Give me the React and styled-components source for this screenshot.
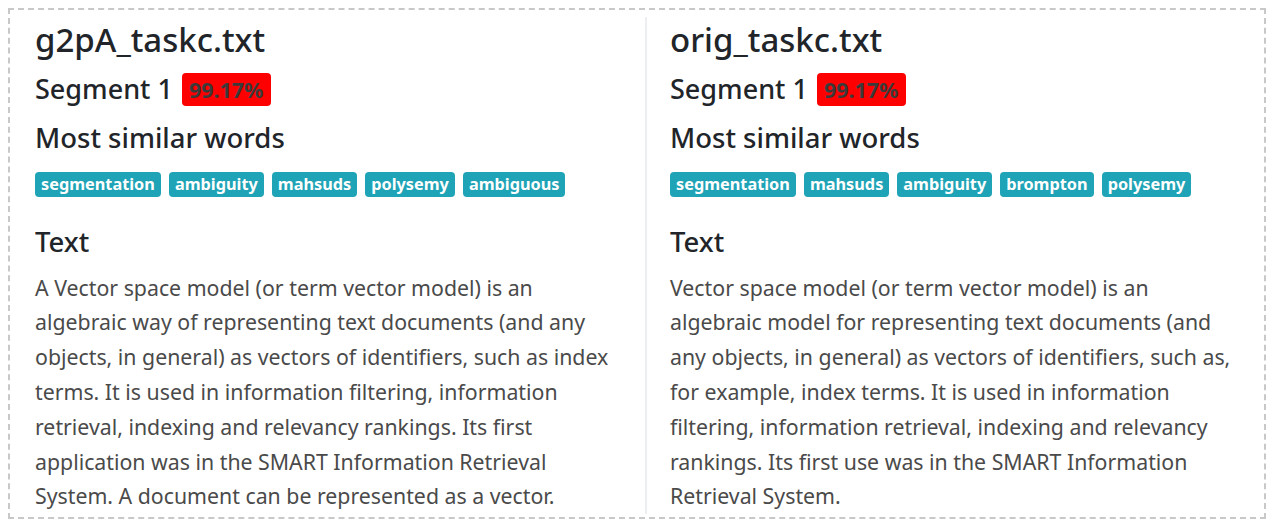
import React from "react";
import styled, { createGlobalStyle } from "styled-components";

const GlobalStyle = createGlobalStyle`
  body {
    margin: 8px;
    background: #ffffff;
    font-family: "Noto Sans", "Open Sans", sans-serif;
    color: #212529;
  }
`;

const Frame = styled.div`
  height: 511px;
  box-sizing: border-box;
  border: 2px dashed #c8c8c8;
  display: grid;
  grid-template-columns: 635px 1fr;
  overflow: hidden;
`;

const Column = styled.div`
  padding: 3px 8px 0 ${({ divided }) => (divided ? "23px" : "25px")};
  margin: 7px 0 3px;
  border-left: ${({ divided }) => (divided ? "2px solid #eceef1" : "none")};
  overflow: hidden;
`;

const FileName = styled.h2`
  margin: 0;
  font-size: 33px;
  font-weight: 500;
  line-height: 40px;
`;

const SegmentTitle = styled.h4`
  margin: 11px 0 0;
  font-size: 27px;
  font-weight: 500;
  line-height: 36px;
  display: flex;
  align-items: center;
  gap: 9px;
`;

const Score = styled.span`
  background: #ff0000;
  color: #3a3a3a;
  font-size: 21.5px;
  font-weight: 700;
  line-height: 33px;
  padding: 0 7px;
  border-radius: 4px;
`;

const SubTitle = styled.h4`
  margin: ${({ spaced }) => (spaced ? "27px" : "13px")} 0 0;
  font-size: 27.5px;
  font-weight: 500;
  line-height: 36px;
`;

const WordList = styled.div`
  display: flex;
  gap: 8px;
  margin-top: 16px;
`;

const Word = styled.span`
  background: #1fa3b6;
  color: #ffffff;
  font-size: 16.3px;
  font-weight: 700;
  line-height: 25px;
  padding: 0 6px;
  border-radius: 4px;
`;

const Body = styled.p`
  margin: 10.6px 0 0;
  width: ${({ narrow }) => (narrow ? "572px" : "592px")};
  font-size: 21.3px;
  line-height: 34.8px;
  color: #4a4a4a;
`;

const docs = [
  {
    name: "g2pA_taskc.txt",
    words: ["segmentation", "ambiguity", "mahsuds", "polysemy", "ambiguous"],
    text:
      "A Vector space model (or term vector model) is an algebraic way of representing text documents (and any objects, in general) as vectors of identifiers, such as index terms. It is used in information filtering, information retrieval, indexing and relevancy rankings. Its first application was in the SMART Information Retrieval System. A document can be represented as a vector.",
  },
  {
    name: "orig_taskc.txt",
    words: ["segmentation", "mahsuds", "ambiguity", "brompton", "polysemy"],
    text:
      "Vector space model (or term vector model) is an algebraic model for representing text documents (and any objects, in general) as vectors of identifiers, such as, for example, index terms. It is used in information filtering, information retrieval, indexing and relevancy rankings. Its first use was in the SMART Information Retrieval System.",
  },
];

const App = () => (
  <>
    <GlobalStyle />
    <Frame>
      {docs.map((doc, i) => (
        <Column key={doc.name} divided={i > 0}>
          <FileName>{doc.name}</FileName>
          <SegmentTitle>
            Segment 1 <Score>99.17%</Score>
          </SegmentTitle>
          <SubTitle>Most similar words</SubTitle>
          <WordList>
            {doc.words.map((w) => (
              <Word key={w}>{w}</Word>
            ))}
          </WordList>
          <SubTitle spaced>Text</SubTitle>
          <Body narrow={i > 0}>{doc.text}</Body>
        </Column>
      ))}
    </Frame>
  </>
);

export default App;
